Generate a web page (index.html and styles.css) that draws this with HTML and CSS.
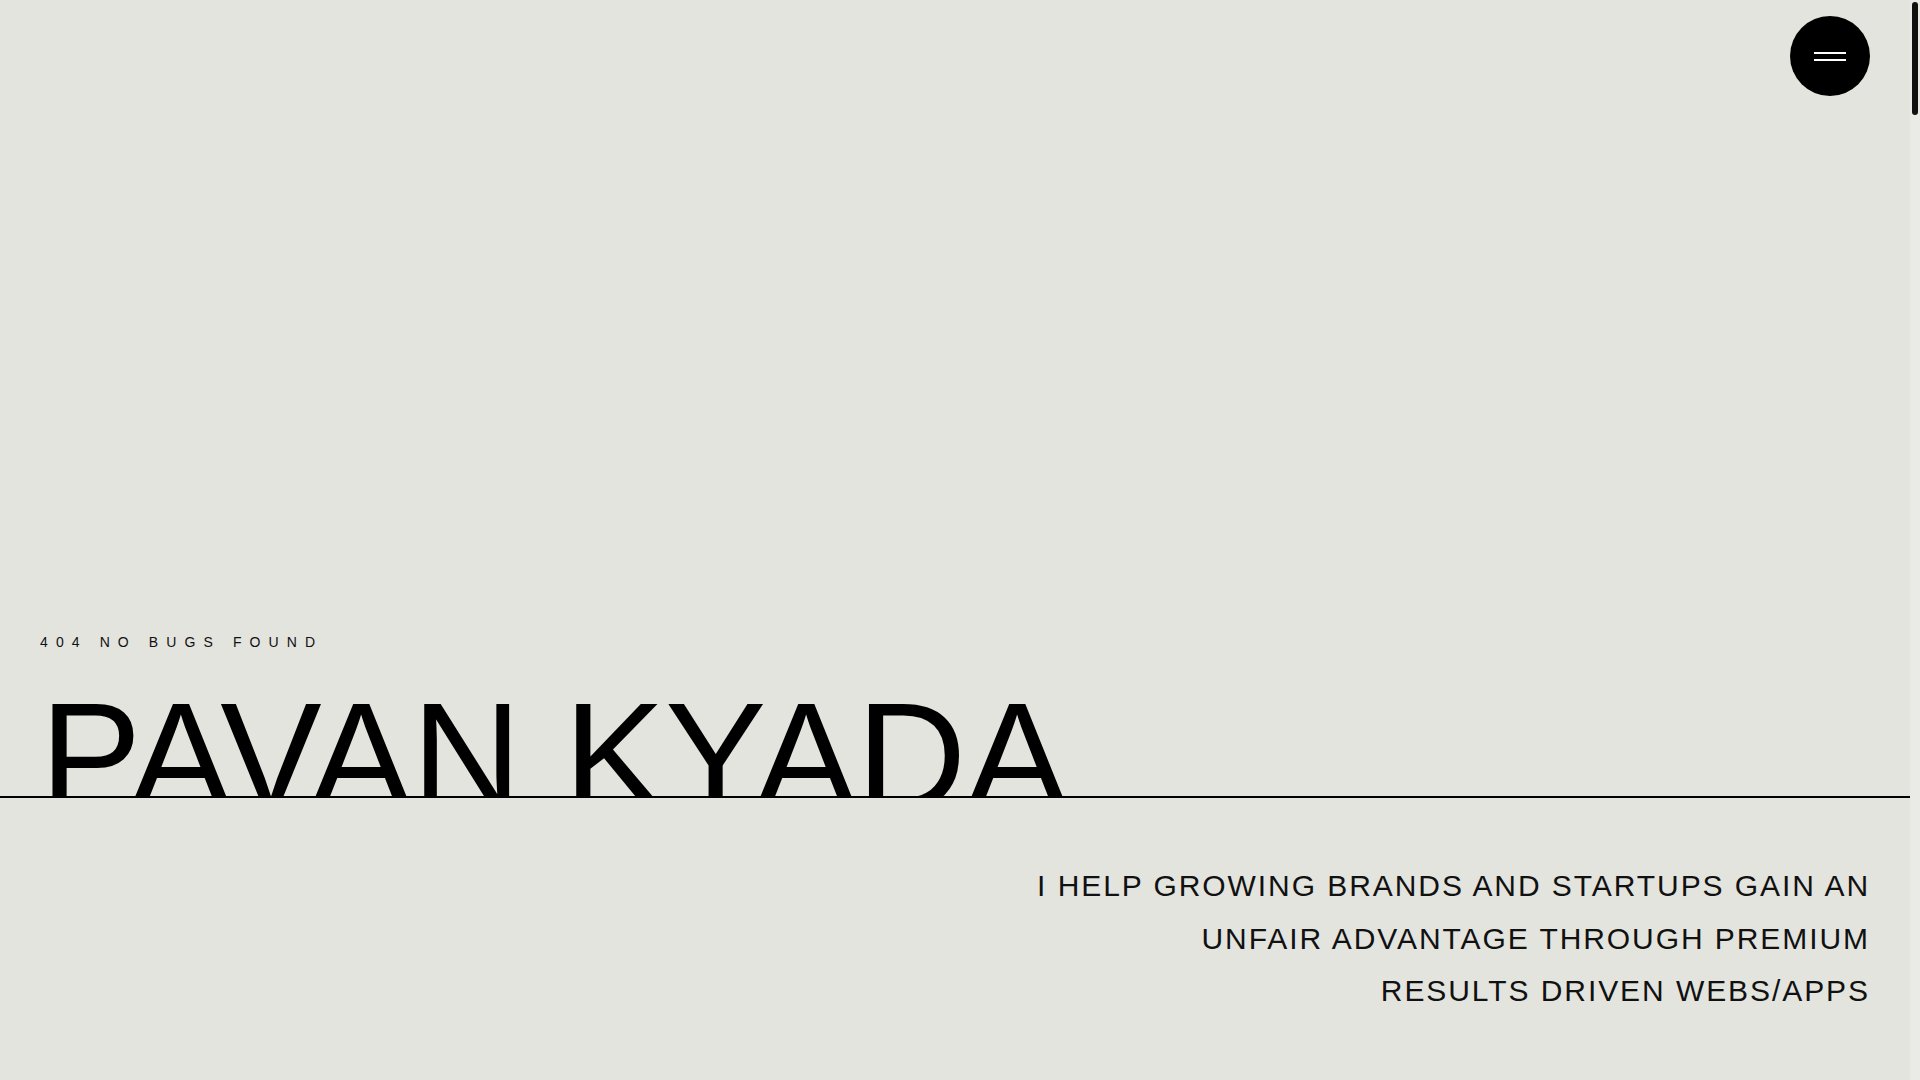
FILE: index.html
```html
<!DOCTYPE html>
<html lang="en">
<head>
<meta charset="utf-8">
<title>Pavan Kyada</title>
<link rel="stylesheet" href="styles.css">
</head>
<body>
<div class="page">
  <section class="hero">
    <header class="header">
      <button class="menu-btn" aria-label="Menu">
        <span class="menu-line"></span>
        <span class="menu-line"></span>
      </button>
    </header>
    <p class="eyebrow">404 NO BUGS FOUND</p>
    <div class="name-wrap">
      <h1 class="name">PAVAN KYADA</h1>
    </div>
  </section>
  <hr class="rule">
  <section class="intro">
    <p class="tagline">I HELP GROWING BRANDS AND STARTUPS GAIN AN<br>UNFAIR ADVANTAGE THROUGH PREMIUM<br>RESULTS DRIVEN WEBS/APPS</p>
  </section>
</div>
<div class="scrollbar"><div class="scroll-thumb"></div></div>
</body>
</html>
```

FILE: styles.css
```css
* { box-sizing: border-box; }
html, body {
  margin: 0;
  padding: 0;
  height: 100%;
  overflow: hidden;
}
body {
  display: flex;
  background: #e4e4df;
  color: #000;
  font-family: "Liberation Sans", Arial, sans-serif;
}
.page {
  flex: 1;
  min-width: 0;
}
.hero {
  height: 796px;
  display: flex;
  flex-direction: column;
  padding: 0 40px;
}
.header {
  display: flex;
  justify-content: flex-end;
  padding-top: 16px;
  margin-bottom: auto;
}
.menu-btn {
  width: 80px;
  height: 80px;
  border-radius: 50%;
  background: #000;
  border: 0;
  padding: 0;
  display: flex;
  flex-direction: column;
  align-items: center;
  justify-content: center;
  gap: 5px;
  cursor: pointer;
}
.menu-line {
  display: block;
  width: 32px;
  height: 2px;
  background: #fff;
}
.eyebrow {
  margin: 0 0 30px;
  font-size: 14px;
  line-height: 16px;
  letter-spacing: 8.1px;
  color: #111;
}
.name-wrap {
  height: 116px;
  overflow: hidden;
}
.name {
  margin: 0;
  font-weight: 400;
  font-size: 152px;
  line-height: 152px;
  color: #000;
  white-space: nowrap;
}
.rule {
  margin: 0;
  border: 0;
  height: 2px;
  background: #000;
}
.intro {
  display: flex;
  justify-content: flex-end;
  padding: 62px 40px 0;
}
.tagline {
  margin: 0;
  text-align: right;
  font-size: 30px;
  line-height: 52.5px;
  letter-spacing: 1.93px;
  color: #111;
}
.scrollbar {
  width: 10px;
  flex: none;
  background: #eaeae7;
  padding: 2px 2px 0;
}
.scroll-thumb {
  width: 6px;
  height: 113px;
  border-radius: 3px;
  background: #111;
}
```
